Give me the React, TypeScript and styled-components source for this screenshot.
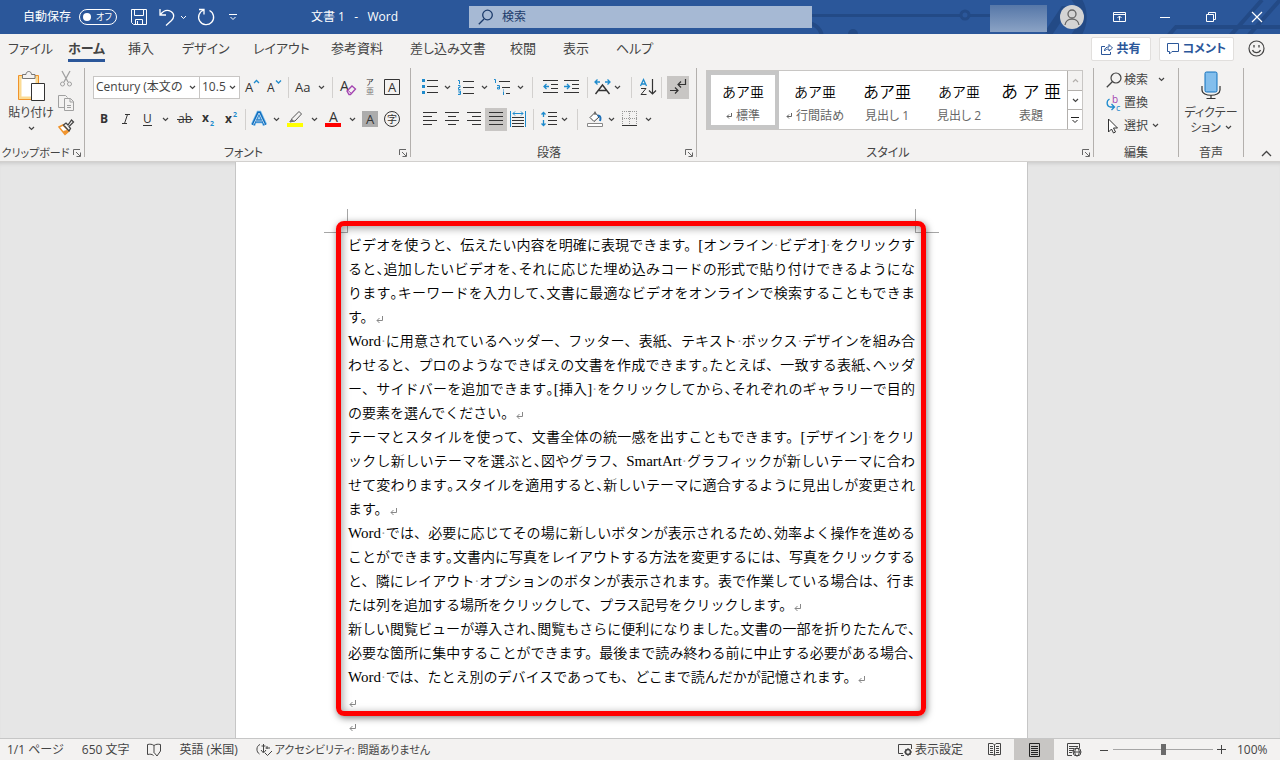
import React from "react";
import styled, { createGlobalStyle } from "styled-components";

const GlobalStyle = createGlobalStyle`
  * { box-sizing: border-box; }
  body { margin: 0; }
  body, button, input {
    font-family: "Open Sans", "Noto Sans CJK JP", sans-serif;
    font-size: 12px;
    line-height: 16px;
    color: #444;
    font-feature-settings: "palt";
  }
  button { background: none; border: 0; padding: 0; cursor: pointer; }
  svg { display: block; flex: none; overflow: visible; }
`;

const App = styled.div`
  height: 100vh;
  display: flex;
  flex-direction: column;
  overflow: hidden;
  background: #e6e6e6;
`;

/* ---------- title bar ---------- */
const TitleBar = styled.header`
  position: relative;
  display: grid;
  grid-template-columns: 469fr 343fr 468fr;
  align-items: center;
  height: 34px;
  flex: none;
  background: #2b579a;
  color: #fff;
`;
const Circuit = styled.svg`
  position: absolute;
  right: 0;
  top: 0;
  overflow: hidden;
`;
const TitleLeft = styled.div`
  display: flex;
  align-items: center;
  padding: 0 71px 0 23px;
`;
const AutoSave = styled.label`
  display: flex;
  align-items: center;
  gap: 8px;
  white-space: nowrap;
`;
const Toggle = styled.button`
  display: flex;
  align-items: center;
  gap: 5px;
  width: 38px;
  height: 16px;
  padding: 0 0 0 3px;
  border: 1px solid #fff;
  border-radius: 8px;
  color: #fff;
  font-size: 9px;
  line-height: 14px;
  white-space: nowrap;
`;
const Knob = styled.span`
  width: 8px;
  height: 8px;
  border-radius: 50%;
  background: #fff;
  flex: none;
`;
const QuickTools = styled.div`
  display: flex;
  align-items: center;
  margin-left: 7px;
`;
const DocTitle = styled.h1`
  margin: 0 0 0 auto;
  font-size: 12px;
  font-weight: 400;
  line-height: 16px;
  white-space: pre;
`;
const SearchBox = styled.label`
  display: flex;
  align-items: center;
  gap: 8px;
  height: 22px;
  padding-left: 9px;
  background: #a6b9d4;
  color: #1c3b6b;
`;
const SearchInput = styled.input`
  flex: 1;
  min-width: 0;
  border: 0;
  padding: 0;
  background: transparent;
  color: #1c3b6b;
  &::placeholder { color: #1c3b6b; opacity: 1; }
`;
const TitleRight = styled.div`
  position: relative;
  display: flex;
  align-items: center;
  justify-content: flex-end;
`;
const UserName = styled.div`
  width: 57px;
  height: 27px;
  margin: 2px 13px 0 0;
  background: linear-gradient(#5677a8, #8ba3c5);
`;
const Avatar = styled.button`
  width: 24px;
  height: 24px;
  margin-right: 12px;
  border-radius: 50%;
  background: #d4d4d4;
  color: #666;
`;
const WindowButton = styled.button`
  display: flex;
  align-items: center;
  justify-content: center;
  width: 46px;
  height: 34px;
  color: #fff;
`;

/* ---------- ribbon ---------- */
const Ribbon = styled.div`
  flex: none;
  background: #f3f2f1;
  border-bottom: 1px solid #d2d0ce;
`;
const TabRow = styled.nav`
  display: flex;
  height: 32px;
  padding-left: 8px;
`;
const Tab = styled.button<{ $w: number; $on?: boolean }>`
  width: ${p => p.$w}px;
  height: 28px;
  padding-top: 3px;
  text-align: left;
  white-space: nowrap;
  font-size: 13px;
  font-weight: ${p => (p.$on ? 700 : 400)};
  span {
    display: inline-block;
    line-height: 22px;
    border-bottom: 3px solid ${p => (p.$on ? "#2b579a" : "transparent")};
  }
`;
const TabActions = styled.div`
  display: flex;
  align-items: center;
  margin-left: auto;
  padding: 0 15px 3px 0;
  gap: 8px;
`;
const ActionButton = styled.button`
  display: flex;
  align-items: center;
  justify-content: center;
  gap: 4px;
  min-width: 60px;
  height: 24px;
  padding: 0 7px;
  border: 1px solid #e1dfdd;
  border-radius: 2px;
  background: #fff;
  color: #2b579a;
  font-weight: 700;
  white-space: nowrap;
`;
const SmileButton = styled.button`
  margin-left: 6px;
`;
const Groups = styled.div`
  display: flex;
  height: 95px;
  padding: 2px 0 4px;
`;
const Group = styled.section<{ $w?: number; $pad?: number }>`
  position: relative;
  display: flex;
  flex-direction: column;
  ${p => (p.$w ? `width: ${p.$w}px; flex: none;` : "flex: 1; min-width: 0;")}
  padding-left: ${p => p.$pad ?? 0}px;
  border-right: 1px solid #b3b0ad;
`;
const GroupLabel = styled.div<{ $pull?: number; $small?: boolean }>`
  margin: auto 0 -4px -${p => p.$pull ?? 0}px;
  text-align: center;
  font-size: ${p => (p.$small ? 11 : 12)}px;
  line-height: 17px;
  white-space: nowrap;
`;
const Launcher = styled.button`
  position: absolute;
  right: 3px;
  bottom: 0;
`;
const ToolRow = styled.div`
  display: flex;
  align-items: center;
  height: 32px;
  &:first-child { margin-top: 3px; }
`;
const Tool = styled.button<{ $w: number; $on?: boolean }>`
  display: flex;
  align-items: center;
  justify-content: center;
  width: ${p => p.$w}px;
  height: 23px;
  flex: none;
  background: ${p => (p.$on ? "#c8c6c4" : "transparent")};
`;
const Rule = styled.span<{ $w: number }>`
  display: flex;
  justify-content: center;
  width: ${p => p.$w}px;
  flex: none;
  &::after {
    content: "";
    width: 1px;
    height: 21px;
    background: #d2d0ce;
  }
`;
const Combo = styled.div<{ $w: number }>`
  display: flex;
  align-items: center;
  width: ${p => p.$w}px;
  height: 23px;
  padding: 0 3px 0 2px;
  border: 1px solid #c8c6c4;
  background: #fff;
  & + & { margin-left: -1px; margin-right: 1px; }
  input {
    flex: 1;
    min-width: 0;
    border: 0;
    padding: 0;
    background: none;
  }
`;
const ClipRow = styled.div`
  display: flex;
  gap: 5px;
  padding: 3px 0 0 9px;
`;
const PasteButton = styled.button`
  display: flex;
  flex-direction: column;
  align-items: center;
  width: 44px;
  white-space: nowrap;
  span { margin: 3px 0 5px; }
`;
const ClipTools = styled.div`
  display: flex;
  flex-direction: column;
  gap: 8px;
`;

/* ---------- style gallery ---------- */
const Gallery = styled.div`
  display: flex;
  height: 60px;
  margin: 2px 10px 0 0;
  border: 1px solid #c8c6c4;
  background: #fff;
`;
const StyleTile = styled.button<{ $on?: boolean }>`
  flex: 1;
  min-width: 0;
  max-width: 72px;
  border: 4px solid ${p => (p.$on ? "#c6c6c6" : "transparent")};
  padding: 3px 0 0;
  overflow: hidden;
`;
const Sample = styled.span<{ $size: number }>`
  display: block;
  height: 24px;
  color: #000;
  font-size: ${p => p.$size}px;
  font-weight: 350;
  line-height: 24px;
  white-space: nowrap;
  font-feature-settings: normal;
`;
const StyleName = styled.span`
  display: flex;
  align-items: center;
  justify-content: center;
  gap: 4px;
  margin-top: 4px;
  line-height: 16px;
  color: #666;
  white-space: nowrap;
`;
const GalleryNav = styled.div`
  display: flex;
  flex-direction: column;
  width: 15px;
  margin-left: auto;
  button {
    flex: 1;
    display: flex;
    align-items: center;
    justify-content: center;
    border-left: 1px solid #b3b0ad;
  }
  button:disabled { color: #b3b0ad; background: #f3f2f1; }
  button + button { border-top: 1px solid #b3b0ad; }
`;
const EditList = styled.div`
  display: flex;
  flex-direction: column;
  padding-left: 12px;
`;
const EditItem = styled.button<{ $gap: number }>`
  display: flex;
  align-items: center;
  height: 23px;
  white-space: nowrap;
  span { margin: 0 ${p => p.$gap}px 0 2px; }
`;
const Dictate = styled.button`
  display: flex;
  flex-direction: column;
  align-items: center;
  padding-top: 3px;
  line-height: 15px;
  white-space: nowrap;
  svg { margin-bottom: 5px; }
  span { display: flex; align-items: center; gap: 4px; }
  span svg { margin: 0; }
`;
const Collapse = styled.div`
  display: flex;
  flex: none;
  width: 36px;
  align-items: flex-end;
  justify-content: center;
  padding-left: 8px;
`;

/* ---------- document ---------- */
const Workspace = styled.main`
  flex: 1;
  min-height: 0;
  padding-right: 17px;
  overflow: hidden;
  background: #e6e6e6;
  box-shadow: inset 0 4px 4px -3px rgba(0, 0, 0, 0.15);
`;
const Page = styled.article`
  width: 793px;
  max-width: 100%;
  min-height: 100%;
  margin: 0 auto;
  padding: 72px 112px 0;
  border: solid #c6c6c6;
  border-width: 0 1px;
  background: #fff;
`;
const TextArea = styled.div`
  position: relative;
  color: #000;
  font-family: "Liberation Serif", "Noto Sans CJK JP", serif;
  font-size: 14px;
  font-weight: 350;
  line-height: 24px;
  font-feature-settings: normal;
`;
const CropMark = styled.span<{ $right?: boolean }>`
  position: absolute;
  top: -25px;
  ${p => (p.$right ? "right: -24px; border-left: 1px solid #a6a6a6;" : "left: -24px; border-right: 1px solid #a6a6a6;")}
  width: 24px;
  height: 24px;
  border-bottom: 1px solid #a6a6a6;
`;
const Highlighted = styled.div`
  position: relative;
`;
const RedFrame = styled.div`
  position: absolute;
  inset: -13px -11px -2px -12px;
  border: 5px solid #f00;
  border-radius: 8px;
  box-shadow: 1px 2px 7px rgba(0, 0, 0, 0.5), inset 1px 2px 8px rgba(0, 0, 0, 0.4);
  pointer-events: none;
`;
const Paragraph = styled.p`
  margin: 0;
  min-height: 24px;
`;
const Line = styled.span<{ $full: boolean }>`
  display: block;
  height: 24px;
  white-space: nowrap;
  text-align: ${p => (p.$full ? "justify" : "left")};
  text-align-last: ${p => (p.$full ? "justify" : "left")};
`;
const Tight = styled.span`
  font-feature-settings: "halt";
`;
const Latin = styled.span`
  font-size: 15px;
  font-weight: 400;
  line-height: 1;
`;
const SpaceDot = styled.span`
  color: #a0a0a0;
  font-weight: 400;
`;
const ReturnMark = styled.svg`
  && { display: inline-block; }
  margin-left: 1px;
  vertical-align: -1px;
`;

/* ---------- status bar ---------- */
const StatusBar = styled.footer`
  display: flex;
  align-items: center;
  flex: none;
  height: 22px;
  border-top: 1px solid #c6c6c6;
  background: #f3f2f1;
  white-space: nowrap;
  padding: 0 9px 0 7px;
`;
const StatusLeft = styled.div`
  display: flex;
  align-items: center;
  gap: 18px;
`;
const StatusRight = styled.div`
  display: flex;
  align-items: center;
  margin-left: auto;
`;
const StatusButton = styled.button<{ $small?: boolean; $after?: number }>`
  display: flex;
  align-items: center;
  gap: 3px;
  margin-right: ${p => p.$after ?? 0}px;
  font-size: ${p => (p.$small ? 11 : 12)}px;
`;
const ViewButton = styled.button<{ $on?: boolean }>`
  display: flex;
  align-items: center;
  justify-content: center;
  width: 40px;
  height: 21px;
  background: ${p => (p.$on ? "#c8c6c4" : "transparent")};
`;
const Zoom = styled.input`
  appearance: none;
  width: 100px;
  height: 16px;
  margin: 0 4px 0 0;
  background: linear-gradient(#a6a6a6, #a6a6a6) center / 100% 1px no-repeat;
  &::-webkit-slider-thumb {
    appearance: none;
    width: 5px;
    height: 11px;
    background: #6b6b6b;
  }
`;
const Percent = styled.output`
  width: 34px;
  margin-left: 11px;
`;

/* ---------- icons ---------- */
type IconProps = { w?: number; h?: number; children: React.ReactNode };
const Icon = ({ w = 16, h = 16, children }: IconProps) => (
  <svg width={w} height={h} viewBox={`0 0 ${w} ${h}`} fill="none" stroke="currentColor" strokeWidth="1" aria-hidden>
    {children}
  </svg>
);
const BLUE = "#1e8bcd";
const Chevron = ({ up }: { up?: boolean }) => (
  <Icon w={7} h={5}><path d={up ? "M1 4l2.5-2.5L6 4" : "M1 1l2.5 2.5L6 1"} strokeWidth="1.2" /></Icon>
);
const Glyph = ({ x, y, size = 12, fill = "#333", bold, children }: any) => (
  <text x={x} y={y} fontSize={size} fill={fill} stroke="none" fontWeight={bold ? 700 : 400}>{children}</text>
);
const Bars = ({ rows }: { rows: [number, number][] }) => (
  <Icon w={14} h={14}>
    {rows.map(([a, b], i) => <path key={i} d={`M${a} ${i * 4 + 0.5}H${b}`} stroke="#333" />)}
  </Icon>
);
const LauncherIcon = () => (
  <Icon w={8} h={8}><path d="M.5 6V.5H7M3 3l4 4M7.5 3.5v4h-4" stroke="#666" /></Icon>
);
const DownTool = ({ w }: { w: number }) => <Tool $w={w} aria-label="その他"><Chevron /></Tool>;

const Mark = () => (
  <ReturnMark width="8" height="7" viewBox="0 0 8 7" fill="none" stroke="#888" aria-hidden>
    <path d="M6.5 0v4.500H1M3.500 2L1 4.500L3.500 7" />
  </ReturnMark>
);

/* "~" after a punctuation mark sets it half-width */
const renderText = (text: string) =>
  text.split(/([、。]~|[A-Za-z]+|[[\]]| )/).map((part, i) => {
    if (part.endsWith("~")) return <Tight key={i}>{part[0]}</Tight>;
    if (part === " ") return <SpaceDot key={i}>·</SpaceDot>;
    if (/^([A-Za-z]+|[[\]])$/.test(part)) return <Latin key={i}>{part}</Latin>;
    return part;
  });

const paragraphs: string[][] = [
  [
    "ビデオを使うと、伝えたい内容を明確に表現できます。[オンライン ビデオ] をクリックす",
    "ると、~追加したいビデオを、~それに応じた埋め込みコードの形式で貼り付けできるようにな",
    "ります。~キーワードを入力して、~文書に最適なビデオをオンラインで検索することもできま",
    "す。",
  ],
  [
    "Word に用意されているヘッダー、フッター、表紙、テキスト ボックス デザインを組み合",
    "わせると、プロのようなできばえの文書を作成できます。~たとえば、一致する表紙、~ヘッダ",
    "ー、サイドバーを追加できます。~[挿入] をクリックしてから、~それぞれのギャラリーで目的",
    "の要素を選んでください。",
  ],
  [
    "テーマとスタイルを使って、文書全体の統一感を出すこともできます。[デザイン] をクリ",
    "ックし新しいテーマを選ぶと、~図やグラフ、SmartArt グラフィックが新しいテーマに合わ",
    "せて変わります。~スタイルを適用すると、~新しいテーマに適合するように見出しが変更され",
    "ます。",
  ],
  [
    "Word では、必要に応じてその場に新しいボタンが表示されるため、~効率よく操作を進める",
    "ことができます。~文書内に写真をレイアウトする方法を変更するには、写真をクリックする",
    "と、隣にレイアウト オプションのボタンが表示されます。表で作業している場合は、行ま",
    "たは列を追加する場所をクリックして、プラス記号をクリックします。",
  ],
  [
    "新しい閲覧ビューが導入され、~閲覧もさらに便利になりました。~文書の一部を折りたたんで、~",
    "必要な箇所に集中することができます。最後まで読み終わる前に中止する必要がある場合、~",
    "Word では、たとえ別のデバイスであっても、どこまで読んだかが記憶されます。",
  ],
];

const tabs: [string, number][] = [
  ["ファイル", 60], ["ホーム", 60], ["挿入", 54], ["デザイン", 71], ["レイアウト", 78],
  ["参考資料", 79], ["差し込み文書", 100], ["校閲", 53], ["表示", 53], ["ヘルプ", 60],
];

const samples: { text: string; name: string; size: number; para?: boolean }[] = [
  { text: "あア亜", name: "標準", size: 14, para: true },
  { text: "あア亜", name: "行間詰め", size: 14, para: true },
  { text: "あア亜", name: "見出し 1", size: 16 },
  { text: "あア亜", name: "見出し 2", size: 14 },
  { text: "あ ア 亜", name: "表題", size: 17 },
];

export default function WordWindow() {
  return (
    <App>
      <GlobalStyle />
      <TitleBar>
        <Circuit width="468" height="34" viewBox="0 0 468 34" fill="none" stroke="#234a86" strokeWidth="4">
          <path d="M0 15.500H148M158 15.500H180" strokeWidth="3" />
          <circle cx="153" cy="15" r="4" strokeWidth="3" />
          <circle cx="-5" cy="38" r="15" />
          <circle cx="41" cy="34" r="5" fill="#234a86" stroke="none" />
          <path d="M262 -4A31 31 0 0 1 262 38" strokeWidth="9" />
          <path d="M236 34l16-24h20" strokeWidth="8" />
          <path d="M356 36l8-9H468M418 36L450 0M436 36L468 0" />
        </Circuit>
        <TitleLeft>
          <AutoSave>
            自動保存
            <Toggle role="switch" aria-checked="false"><Knob />オフ</Toggle>
          </AutoSave>
          <QuickTools>
            <Tool $w={30} aria-label="保存"><Icon><path d="M.5.5h15v15H2.500l-2-2zM3.500.5v6h9v-6M4.500 15.500v-5h7v5M6.500 12v3.500" stroke="#fff" /></Icon></Tool>
            <Tool $w={26} aria-label="元に戻す"><Icon w={18} h={18}><path d="M2 1v6h6M2 7C5 3 9 1 13 3.500S16 10 13.500 12.500L8 17.500" stroke="#fff" strokeWidth="1.300" /></Icon></Tool>
            <Tool $w={7} aria-label="履歴"><Icon w={7} h={5}><path d="M1 1l2.500 2.500L6 1" stroke="#fff" /></Icon></Tool>
            <Tool $w={38} aria-label="やり直し"><Icon w={18} h={18}><path d="M2 1.500h5v5M12.500 2.500A7.500 7.500 0 1 1 7 2" stroke="#fff" strokeWidth="1.300" /></Icon></Tool>
            <Tool $w={16} aria-label="カスタマイズ"><Icon w={8} h={8}><path d="M0 1.500H8M1.500 4L4 6.500L6.500 4" stroke="#fff" /></Icon></Tool>
          </QuickTools>
          <DocTitle>{"文書 1   -   Word"}</DocTitle>
        </TitleLeft>
        <SearchBox>
          <Icon><path d="M.8 15.200L6 10" strokeWidth="1.300" /><circle cx="9.500" cy="6" r="4.800" strokeWidth="1.300" /></Icon>
          <SearchInput placeholder="検索" aria-label="検索" />
        </SearchBox>
        <TitleRight>
          <UserName />
          <Avatar aria-label="アカウント">
            <Icon w={24} h={24}><circle cx="12" cy="9" r="4" strokeWidth="1.300" /><path d="M5 20c1-8 13-8 14 0" strokeWidth="1.300" /></Icon>
          </Avatar>
          <WindowButton aria-label="リボンの表示オプション"><Icon w={13} h={10}><path d="M.5.5h12v9H.5zM.5 2.500h12M6.500 8.500V4M4.500 6l2-2 2 2" /></Icon></WindowButton>
          <WindowButton aria-label="最小化"><Icon w={10} h={10}><path d="M0 5.500H10" /></Icon></WindowButton>
          <WindowButton aria-label="元に戻す (縮小)"><Icon w={10} h={10}><path d="M.5 2.500h7v7h-7zM2.500 2V.5h7v7H8" /></Icon></WindowButton>
          <WindowButton aria-label="閉じる"><Icon w={10} h={10}><path d="M0 0L10 10M10 0L0 10" strokeWidth="1.200" /></Icon></WindowButton>
        </TitleRight>
      </TitleBar>

      <Ribbon>
        <TabRow>
          {tabs.map(([name, w]) => (
            <Tab key={name} $w={w} $on={name === "ホーム"}><span>{name}</span></Tab>
          ))}
          <TabActions>
            <ActionButton>
              <Icon w={12} h={12}><path d="M4 3.500H.5v8h9V9M3.500 8c0-3 2-4 4.500-4V1.500L11.500 5 8 8V6C6 6 4.500 6.500 3.500 8z" /></Icon>共有
            </ActionButton>
            <ActionButton><Icon w={12} h={12}><path d="M.5.5h11v8H5l-2.500 2.500V8.500h-2z" /></Icon>コメント</ActionButton>
            <SmileButton aria-label="フィードバック">
              <Icon w={17} h={17}><circle cx="8.500" cy="8.500" r="7.500" strokeWidth="1.200" /><path d="M4.500 10c1.500 3.500 6.500 3.500 8 0M6 5v2.500M11 5v2.500" strokeWidth="1.300" /></Icon>
            </SmileButton>
          </TabActions>
        </TabRow>

        <Groups>
          <Group $w={85}>
            <ClipRow>
              <PasteButton>
                <Icon w={28} h={31}>
                  <path d="M1.500 4.500h20v24h-20z" fill="#fbdb95" stroke="#f0932b" />
                  <path d="M4.500 7.500h14v18h-14z" fill="#fff" stroke="none" />
                  <path d="M5.500 7.500v-4H9c0-4 5.500-4 5.500 0H18v4z" fill="#f3f2f1" stroke="#777" />
                  <path d="M14.500 12.500h13v17h-13z" fill="#fff" stroke="#333" />
                </Icon>
                <span>貼り付け</span>
                <Chevron />
              </PasteButton>
              <ClipTools>
                <button aria-label="切り取り"><Icon><path d="M4 0l6 11M12 0L6 11" stroke="#a0a0a0" strokeWidth="1.300" /><circle cx="4.500" cy="13" r="2" stroke="#a0a0a0" /><circle cx="11.500" cy="13" r="2" stroke="#a0a0a0" /></Icon></button>
                <button aria-label="コピー"><Icon w={17}><path d="M6 12.500H.5V.5h7l2 2" stroke="#a0a0a0" /><path d="M6.500 3.500h6l3 3v9h-9zM12 3.500v3.500h3.500M9 10.500h4M9 12.500h4" stroke="#a0a0a0" /></Icon></button>
                <button aria-label="書式のコピー"><Icon><path d="M1 8l4-2 6 6-4 3.500z" fill="#fff" stroke="#f0932b" strokeWidth="1.500" /><path d="M5 12l4-1 1.500 1.500L7 15z" fill="#f0932b" stroke="none" /><path d="M5.500 6L8 4l2 2 3.500-5L15.500 3 11 7.500l1.500 2L11 12z" fill="#f3f2f1" stroke="#444" strokeWidth="1.300" /></Icon></button>
              </ClipTools>
            </ClipRow>
            <GroupLabel $pull={13} $small>クリップボード</GroupLabel>
            <Launcher aria-label="クリップボードの設定"><LauncherIcon /></Launcher>
          </Group>

          <Group $w={326} $pad={8}>
            <ToolRow>
              <Combo $w={107}><input aria-label="フォント" defaultValue="Century (本文の" /><Chevron /></Combo>
              <Combo $w={41}><input aria-label="フォント サイズ" defaultValue="10.5" /><Chevron /></Combo>
              <Tool $w={22} aria-label="拡大"><Icon><Glyph x="1" y="13" size={13}>A</Glyph><path d="M10 4l2.500-2.500L15 4" stroke={BLUE} strokeWidth="1.300" /></Icon></Tool>
              <Tool $w={22} aria-label="縮小"><Icon><Glyph x="1" y="13" size={12}>A</Glyph><path d="M10 1.500L12.500 4 15 1.500" stroke={BLUE} strokeWidth="1.300" /></Icon></Tool>
              <Rule $w={6} />
              <Tool $w={26} aria-label="文字種の変換"><Icon w={18}><Glyph x="0" y="13" size={13}>Aa</Glyph></Icon></Tool>
              <DownTool w={8} />
              <Rule $w={14} />
              <Tool $w={18} aria-label="書式のクリア"><Icon><Glyph x="0" y="12" size={14}>A</Glyph><path d="M7 12l5-5 3.500 3-5 5.500H9z" fill="#f3f2f1" stroke="#a343b0" strokeWidth="1.300" /><path d="M8 11.500l3.500 3" stroke="#a343b0" /></Icon></Tool>
              <Tool $w={26} aria-label="ルビ"><Icon w={12} h={18}><Glyph x="2" y="7" size={8}>ア</Glyph><Glyph x="2" y="16" size={8} fill="#777">亜</Glyph></Icon></Tool>
              <Tool $w={18} aria-label="囲み線"><Icon><path d="M.5.5h15v15H.5z" stroke="#333" /><Glyph x="4" y="13" size={13}>A</Glyph></Icon></Tool>
            </ToolRow>
            <ToolRow>
              <Tool $w={22} aria-label="太字"><Icon><Glyph x="4" y="12" bold>B</Glyph></Icon></Tool>
              <Tool $w={22} aria-label="斜体"><Icon><path d="M7 3.500h5M4 12.500h5M9.500 3.500l-3 9" stroke="#333" /></Icon></Tool>
              <Tool $w={20} aria-label="下線"><Icon><Glyph x="4" y="12" size={12}>U</Glyph><path d="M4 14.500h9" stroke="#333" /></Icon></Tool>
              <DownTool w={16} />
              <Tool $w={24} aria-label="取り消し線"><Icon><Glyph x="1" y="12" size={12}>ab</Glyph><path d="M0 8.500h16" stroke="#333" /></Icon></Tool>
              <Tool $w={22} aria-label="下付き"><Icon><Glyph x="2" y="11" size={12} bold>x</Glyph><Glyph x="10" y="15" size={7} bold fill={BLUE}>2</Glyph></Icon></Tool>
              <Tool $w={24} aria-label="上付き"><Icon><Glyph x="2" y="12" size={12} bold>x</Glyph><Glyph x="10" y="6" size={7} bold fill={BLUE}>2</Glyph></Icon></Tool>
              <Rule $w={4} />
              <Tool $w={24} aria-label="文字の効果"><Icon><path d="M2 14L7.500 2h1L14 14M4.500 10h7" stroke="#78bdec" strokeWidth="4.500" /><path d="M2 14L7.500 2h1L14 14M4.500 10h7" stroke="#0f6cbd" strokeWidth="3" /><path d="M2.500 13.500L8 2l5.500 11.500M5 10h6" stroke="#eaf5fc" strokeWidth=".8" /></Icon></Tool>
              <DownTool w={10} />
              <Tool $w={28} aria-label="蛍光ペン"><Icon><path d="M0 12h16v4H0z" fill="#ff0" stroke="none" /><path d="M5 7.500L12 .5l2.500 2.500L8 10 5 10.500 3 11z" stroke="#555" fill="#f3f2f1" /><path d="M2 11l3-3 2.500 2.500z" fill="#777" stroke="none" /></Icon></Tool>
              <DownTool w={10} />
              <Tool $w={28} aria-label="フォントの色"><Icon><Glyph x="4" y="11" size={14}>A</Glyph><path d="M0 12h16v4H0z" fill="red" stroke="none" /></Icon></Tool>
              <DownTool w={10} />
              <Tool $w={26} aria-label="文字の網かけ"><Icon><path d="M0 0h16v16H0z" fill="#acacac" stroke="none" /><Glyph x="4" y="13" size={13}>A</Glyph></Icon></Tool>
              <Tool $w={18} aria-label="囲い文字"><Icon><circle cx="8" cy="8" r="7.500" stroke="#333" /><Glyph x="3" y="12" size={10}>字</Glyph></Icon></Tool>
            </ToolRow>
            <GroupLabel $pull={16}>フォント</GroupLabel>
            <Launcher aria-label="フォントの設定"><LauncherIcon /></Launcher>
          </Group>

          <Group $w={286} $pad={7}>
            <ToolRow>
              <Tool $w={24} aria-label="箇条書き"><Icon><path d="M0 0h3v3H0zM0 6h3v3H0zM0 12h3v3H0z" fill={BLUE} stroke="none" /><path d="M5 1.500h11M5 7.500h11M5 13.500h11" stroke="#333" /></Icon></Tool>
              <DownTool w={10} />
              <Tool $w={28} aria-label="段落番号"><Icon><path d="M0 1.500h1.500V5M0 6.500h2v2H.5v2h2M0 12h2.500v3.500H0M.5 13.800h2" stroke={BLUE} /><path d="M5 2.500h11M5 8.500h11M5 14.500h11" stroke="#333" /></Icon></Tool>
              <DownTool w={8} />
              <Tool $w={28} aria-label="アウトライン"><Icon><path d="M0 .5h1.500V4M3 6.500h2.500V10H3.500V8.300h2M9.500 10.500v1M9.500 12.500V16" stroke={BLUE} /><path d="M5 2.500h11M8 8.500h8M12 14.500h4" stroke="#333" /></Icon></Tool>
              <DownTool w={8} />
              <Rule $w={16} />
              <Tool $w={20} aria-label="インデントを減らす"><Icon w={15} h={14}><path d="M0 .5h15M8 4.500h7M8 8.500h7M0 12.500h15" stroke="#333" /><path d="M6 6.500H1M3.500 4L1 6.500 3.500 9" stroke={BLUE} strokeWidth="1.300" /></Icon></Tool>
              <Tool $w={22} aria-label="インデントを増やす"><Icon w={15} h={14}><path d="M0 .5h15M8 4.500h7M8 8.500h7M0 12.500h15" stroke="#333" /><path d="M0 6.500h5M3 4l2.500 2.500L3 9" stroke={BLUE} strokeWidth="1.300" /></Icon></Tool>
              <Rule $w={10} />
              <Tool $w={20} aria-label="拡張書式"><Icon w={17}><path d="M1.500 15L8.500 6l7 9M4.500 11.500h8" stroke="#333" strokeWidth="1.400" /><path d="M6 3H1M3.500.5L1 3l2.500 2.500M11 3h5M13.500.5L16 3l-2.500 2.500" stroke={BLUE} strokeWidth="1.300" /></Icon></Tool>
              <DownTool w={10} />
              <Rule $w={18} />
              <Tool $w={16} aria-label="並べ替え"><Icon w={17}><path d="M.5 7L3.500 .5 6.500 7M1.500 5h4" stroke={BLUE} strokeWidth="1.300" /><path d="M1 9.500h5L1 15.500h5.500" stroke="#333" /><path d="M12.500 0v15M9 11.500l3.500 3.500L16 11.500" stroke="#333" strokeWidth="1.200" /></Icon></Tool>
              <Rule $w={11} />
              <Tool $w={22} $on aria-label="編集記号の表示"><Icon><path d="M15.500 0v5.500H8M11 2.500L8 5.500l3 3M0 11.500h8M5 8.500l3 3-3 3" stroke="#333" strokeWidth="1.200" /></Icon></Tool>
            </ToolRow>
            <ToolRow>
              <Tool $w={24} aria-label="左揃え"><Bars rows={[[0, 14], [0, 9], [0, 14], [0, 9]]} /></Tool>
              <Tool $w={20} aria-label="中央揃え"><Bars rows={[[0, 14], [3, 11], [0, 14], [3, 11]]} /></Tool>
              <Tool $w={23} aria-label="右揃え"><Bars rows={[[0, 14], [5, 14], [0, 14], [5, 14]]} /></Tool>
              <Tool $w={22} $on aria-label="両端揃え"><Bars rows={[[0, 14], [0, 14], [0, 14], [0, 14]]} /></Tool>
              <Tool $w={22} aria-label="均等割り付け"><Icon><path d="M.5 0v16M15.500 0v16M3 2.500h10M5 .5l-2 2 2 2M11 .5l2 2-2 2" stroke={BLUE} /><path d="M2 6.500h12M2 9.500h12M2 12.500h12M2 15.500h12" stroke="#333" /></Icon></Tool>
              <Rule $w={8} />
              <Tool $w={23} aria-label="行間"><Icon><path d="M2.500 1v5M.5 3.500l2-2 2 2M2.500 9v6M.5 12.500l2 2 2-2" stroke={BLUE} strokeWidth="1.300" /><path d="M7 1.500h9M7 5.500h9M7 9.500h9M7 13.500h9" stroke="#333" /></Icon></Tool>
              <DownTool w={9} />
              <Rule $w={16} />
              <Tool $w={20} aria-label="塗りつぶし"><Icon><path d="M3 6.500L8 1.500l4 4.500-5 4.500zM8 4V.5" stroke="#444" fill="#fff" /><path d="M10.500 4.500c4 0 3 4 2.500 5.500" stroke="#1e70b8" strokeWidth="2" /><path d="M.5 12.500h15v3H.5z" fill="#fff" stroke="#888" /></Icon></Tool>
              <DownTool w={12} />
              <Tool $w={26} aria-label="罫線"><Icon><path d="M.5 0v14M14.500 0v14M7.500 0v14M0 .5h15M0 7.500h15" stroke="#999" strokeDasharray="1 1" /><path d="M0 14.500h15" stroke="#333" /></Icon></Tool>
              <DownTool w={10} />
            </ToolRow>
            <GroupLabel $pull={16}>段落</GroupLabel>
            <Launcher aria-label="段落の設定"><LauncherIcon /></Launcher>
          </Group>

          <Group $pad={9}>
            <Gallery>
              {samples.map((s, i) => (
                <StyleTile key={s.name} $on={i === 0}>
                  <Sample $size={s.size}>{s.text}</Sample>
                  <StyleName>
                    {s.para && <Icon w={6} h={6}><path d="M5.500 0v3.500H1M3 1.500l-2 2 2 2" stroke="#666" /></Icon>}
                    {s.name}
                  </StyleName>
                </StyleTile>
              ))}
              <GalleryNav>
                <button aria-label="上へ" disabled><Chevron up /></button>
                <button aria-label="下へ"><Chevron /></button>
                <button aria-label="スタイルの一覧"><Icon w={8} h={8}><path d="M0 1.500h8M1.500 4L4 6.500 6.500 4" stroke="#222" /></Icon></button>
              </GalleryNav>
            </Gallery>
            <GroupLabel $pull={23}>スタイル</GroupLabel>
            <Launcher aria-label="スタイルの設定"><LauncherIcon /></Launcher>
          </Group>

          <Group $w={85}>
            <EditList>
              <EditItem $gap={10}><Icon><path d="M.8 15.200L6.500 9.500" strokeWidth="1.300" /><circle cx="10" cy="6" r="5" strokeWidth="1.200" /></Icon><span>検索</span><Chevron /></EditItem>
              <EditItem $gap={0}><Icon><Glyph x="6" y="8" size={10} fill="#a343b0">b</Glyph><Glyph x="10" y="16" size={9} fill={BLUE}>c</Glyph><path d="M3.500 4C0 6 .5 11 4 12h4M5.500 9L8.500 12l-3 3" stroke={BLUE} strokeWidth="1.300" /></Icon><span>置換</span></EditItem>
              <EditItem $gap={4}><Icon><path d="M2.500 1v13l3-3 2 4 2-1-2-4h4z" fill="#fff" stroke="#333" /></Icon><span>選択</span><Chevron /></EditItem>
            </EditList>
            <GroupLabel>編集</GroupLabel>
          </Group>
          <Group $w={65}>
            <Dictate>
              <Icon w={20} h={29}>
                <path d="M1 15v4c0 7 18 7 18 0v-4M10 24v4M5.500 27.500h9" stroke="#333" strokeWidth="1.200" />
                <rect x="4" y="1" width="12" height="20" rx="1.500" fill="#83beec" stroke="#1070bc" />
              </Icon>
              ディクテー
              <span>ション<Chevron /></span>
            </Dictate>
            <GroupLabel>音声</GroupLabel>
          </Group>
          <Collapse><button aria-label="リボンを折りたたむ"><Icon w={11} h={7}><path d="M1 6l4.500-4.500L10 6" strokeWidth="1.300" /></Icon></button></Collapse>
        </Groups>
      </Ribbon>

      <Workspace>
        <Page>
          <TextArea>
            <CropMark />
            <CropMark $right />
            <Highlighted>
              <RedFrame />
              {paragraphs.map((lines, p) => (
                <Paragraph key={p}>
                  {lines.map((line, i) => (
                    <Line key={i} $full={i < lines.length - 1}>
                      {renderText(line)}
                      {i === lines.length - 1 && <Mark />}
                    </Line>
                  ))}
                </Paragraph>
              ))}
              <Paragraph><Mark /></Paragraph>
            </Highlighted>
            <Paragraph><Mark /></Paragraph>
          </TextArea>
        </Page>
      </Workspace>

      <StatusBar>
        <StatusLeft>
          <span>1/1 ページ</span>
          <span>650 文字</span>
          <StatusButton aria-label="文章校正"><Icon w={14} h={14}><path d="M7 2.500C5 1 3 1 .5 1.500v10c2.500-.5 4.500-.5 6 1M7 2.500V10M7 2.500c2-1.500 4-1.500 6.500-1V8M7.500 10l2.500 3 3.500-5" /></Icon></StatusButton>
          <span>英語 (米国)</span>
          <StatusButton $small>
            <Icon w={16} h={14}><path d="M4 1.500C0 3 0 9 3.500 11M7.500 1v8M5.500 3h4M5 7l2.500 3L10 7M11 3v3M9.500 5H14M9 10l2.500 2.500L16 8" /></Icon>
            アクセシビリティ: 問題ありません
          </StatusButton>
        </StatusLeft>
        <StatusRight>
          <StatusButton $after={11}>
            <Icon w={14} h={13}><path d="M5 10.500H.5V1.500h13V6M3 12.500h3" /><circle cx="10" cy="9" r="2.500" strokeWidth="1.500" /><path d="M10 5v1.500M10 11.500V13M6 9h1.500M12.500 9H14M7.500 6.500l1 1M11.500 10.500l1 1" /></Icon>
            表示設定
          </StatusButton>
          <ViewButton aria-label="閲覧モード"><Icon w={13} h={13}><path d="M6.500 2L5 .5H.5v11H5l1.500 1 1.500-1h4.500V.5H8zM6.500 2v10M2 3.500h3M2 5.500h3M2 7.500h3M2 9.500h3M8 3.500h3M8 5.500h3M8 7.500h3M8 9.500h3" /></Icon></ViewButton>
          <ViewButton $on aria-label="印刷レイアウト"><Icon w={11} h={14}><path d="M.5.5h10v13H.5zM2 3.500h7M2 5.500h7M2 7.500h7M2 9.500h7M2 11.500h7" stroke="#222" /></Icon></ViewButton>
          <ViewButton aria-label="Web レイアウト"><Icon w={15} h={14}><path d="M5 12.500H.5V.5h12V5M2 3.500h9M2 5.500h5M2 7.500h4M2 9.500h3" /><circle cx="10" cy="9" r="4" /><path d="M6 9h8M10 5c-3 2-3 6 0 8M10 5c3 2 3 6 0 8" /></Icon></ViewButton>
          <Tool $w={19} aria-label="縮小"><Icon w={8} h={8}><path d="M0 4.500h8" /></Icon></Tool>
          <Zoom type="range" min={0} max={100} defaultValue={50} aria-label="ズーム" />
          <Tool $w={9} aria-label="拡大"><Icon w={9} h={9}><path d="M0 4.500h9M4.500 0v9" /></Icon></Tool>
          <Percent>100%</Percent>
        </StatusRight>
      </StatusBar>
    </App>
  );
}
